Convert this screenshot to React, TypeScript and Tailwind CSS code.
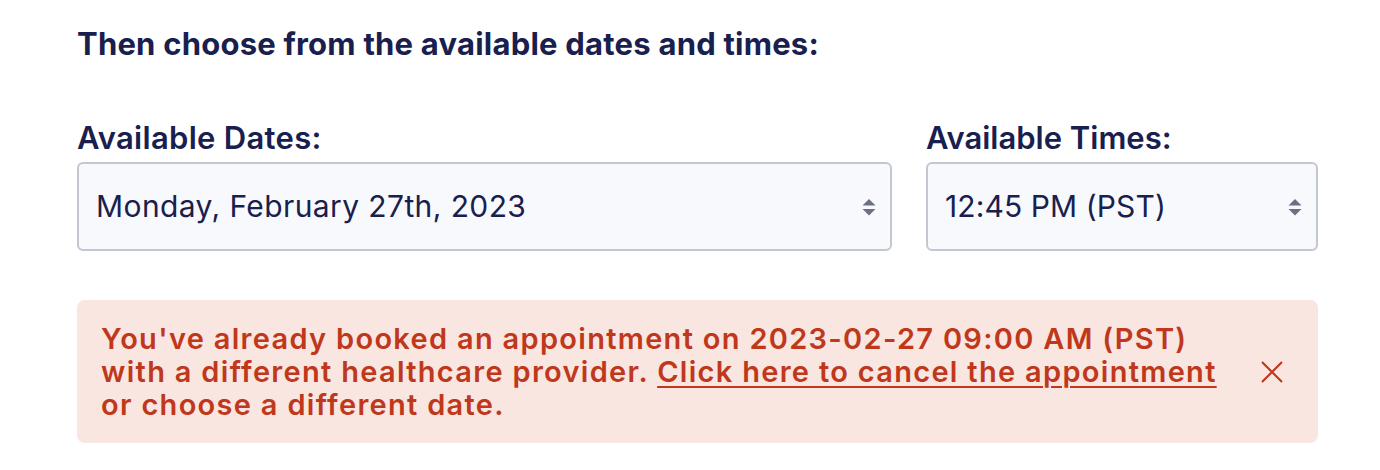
import React from "react";

function Arrows() {
  return (
    <svg width="16" height="24" viewBox="0 0 16 24" className="shrink-0">
      <path d="M8 4 L14.5 10.5 L1.5 10.5 Z" fill="#6b7185" />
      <path d="M8 20.5 L14.5 14 L1.5 14 Z" fill="#6b7185" />
    </svg>
  );
}

export default function App() {
  return (
    <div className="w-[1380px] h-[470px] bg-white font-['Inter',sans-serif] text-[#19204e]">
      <div className="ml-[77px] w-[1241px] pt-[24px]">
        <h2 className="text-[31px] font-bold leading-[40px] tracking-[0.22px]">
          Then choose from the available dates and times:
        </h2>
        <div className="mt-[54px] grid grid-cols-[815px_392px] gap-x-[34px]">
          <div className="flex flex-col">
            <label className="text-[31px] font-semibold leading-[40px] mb-[4px] tracking-[0.3px]">Available Dates:</label>
            <div className="h-[89px] rounded-[6px] border-2 border-[#c3c7d1] bg-[#f8f9fc] flex items-center justify-between pl-[17px] pr-[13px]">
              <span className="text-[30px] font-normal tracking-[0.4px]">Monday, February 27th, 2023</span>
              <Arrows />
            </div>
          </div>
          <div className="flex flex-col">
            <label className="text-[31px] font-semibold leading-[40px] mb-[4px] tracking-[0px]">Available Times:</label>
            <div className="h-[89px] rounded-[6px] border-2 border-[#c3c7d1] bg-[#f8f9fc] flex items-center justify-between pl-[17px] pr-[13px]">
              <span className="text-[30px] font-normal tracking-[0.1px]">12:45 PM (PST)</span>
              <Arrows />
            </div>
          </div>
        </div>
        <div className="mt-[49px] h-[143px] rounded-[8px] bg-[#f9e6e0] flex items-center pl-[24px] pr-[34px] text-[#c0381c]">
          <p className="flex-1 text-[29px] font-semibold leading-[33px] tracking-[1.3px]">
            You've already booked an appointment on 2023-02-27 09:00 AM (PST)
            <br />
            with a different healthcare provider.{" "}
            <a className="underline underline-offset-[4px] decoration-2">Click here to cancel the appointment</a>
            <br />
            or choose a different date.
          </p>
          <svg width="24" height="24" viewBox="0 0 24 24" className="shrink-0">
            <path d="M2 2 L22 22 M22 2 L2 22" stroke="#c0381c" strokeWidth="2.2" />
          </svg>
        </div>
      </div>
    </div>
  );
}
